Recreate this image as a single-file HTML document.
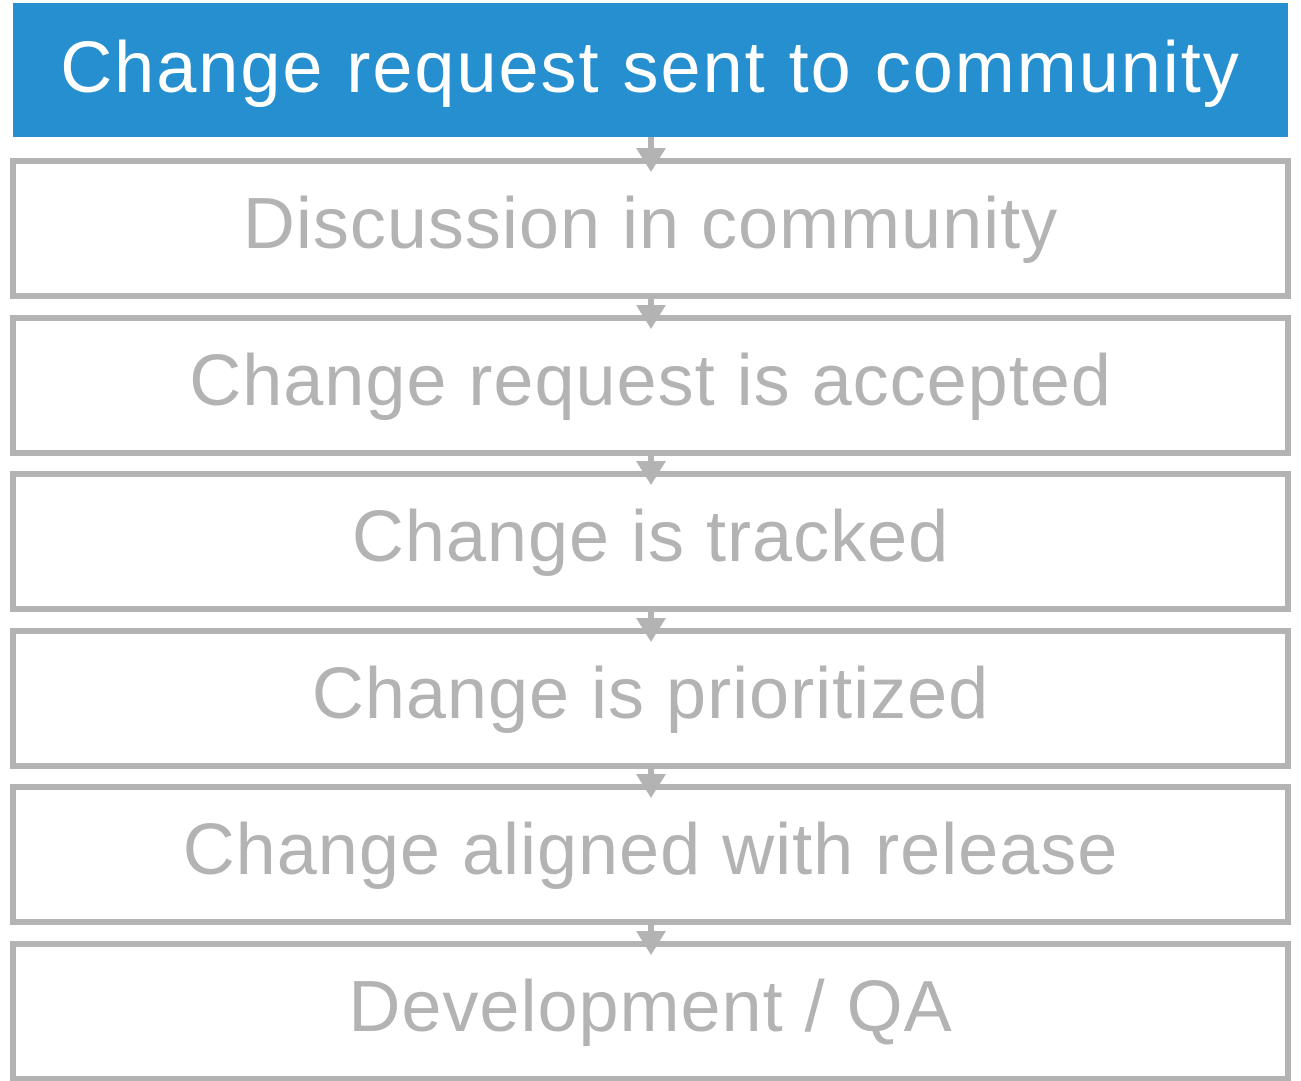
<!DOCTYPE html>
<html><head><style>
html,body{margin:0;padding:0;background:#fff;width:1301px;height:1081px;overflow:hidden;position:relative;font-family:"Liberation Sans",sans-serif}
.b{position:absolute;left:10px;width:1269px;height:129px;border:6px solid #b3b3b3;background:#fff;color:#b3b3b3;font-size:72px;letter-spacing:1px;text-align:center;line-height:121px;box-sizing:content-box}
.top{position:absolute;left:13px;top:3px;width:1275px;height:134px;background:#268fcf;color:#fff;font-size:72px;letter-spacing:2px;text-align:center;line-height:130px}
</style></head><body>
<div class="top">Change request sent to community</div>
<div class="b" style="top:158px">Discussion in community</div>
<div class="b" style="top:315px">Change request is accepted</div>
<div class="b" style="top:471px">Change is tracked</div>
<div class="b" style="top:628px">Change is prioritized</div>
<div class="b" style="top:784px">Change aligned with release</div>
<div class="b" style="top:941px">Development / QA</div>
<svg style="position:absolute;left:0;top:0" width="1301" height="1081">
<g fill="#b3b3b3">
<rect x="648" y="137" width="6" height="12"/><polygon points="636,148 666,148 651,172"/>
<rect x="648" y="294" width="6" height="12"/><polygon points="636,305 666,305 651,329"/>
<rect x="648" y="450" width="6" height="12"/><polygon points="636,461 666,461 651,485"/>
<rect x="648" y="607" width="6" height="12"/><polygon points="636,618 666,618 651,642"/>
<rect x="648" y="763" width="6" height="12"/><polygon points="636,774 666,774 651,798"/>
<rect x="648" y="920" width="6" height="12"/><polygon points="636,931 666,931 651,955"/>
</g></svg>
</body></html>
